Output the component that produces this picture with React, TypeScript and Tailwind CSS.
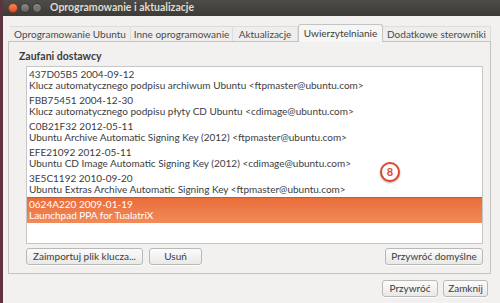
import React from "react";

const rows = [
  { id: "437D05B5 2004-09-12", name: "Klucz automatycznego podpisu archiwum Ubuntu <ftpmaster@ubuntu.com>" },
  { id: "FBB75451 2004-12-30", name: "Klucz automatycznego podpisu płyty CD Ubuntu <cdimage@ubuntu.com>" },
  { id: "C0B21F32 2012-05-11", name: "Ubuntu Archive Automatic Signing Key (2012) <ftpmaster@ubuntu.com>" },
  { id: "EFE21092 2012-05-11", name: "Ubuntu CD Image Automatic Signing Key (2012) <cdimage@ubuntu.com>" },
  { id: "3E5C1192 2010-09-20", name: "Ubuntu Extras Archive Automatic Signing Key <ftpmaster@ubuntu.com>" },
  { id: "0624A220 2009-01-19", name: "Launchpad PPA for TualatriX", selected: true },
];

const tabs = [
  { label: "Oprogramowanie Ubuntu", w: "w-[121px]" },
  { label: "Inne oprogramowanie", w: "w-[102px]" },
  { label: "Aktualizacje", w: "w-[65px]" },
  { label: "Uwierzytelnianie", w: "w-[85px]", active: true },
  { label: "Dodatkowe sterowniki", w: "w-[108px]" },
];

const Button = ({ children, className = "" }: { children: React.ReactNode; className?: string }) => (
  <div
    className={
      "flex h-[17px] items-center justify-center whitespace-nowrap rounded-[3px] border border-[#b9b9b7] bg-gradient-to-b from-[#fbfbfb] to-[#e9e9e8] text-[10px] text-[#3c3c3c] shadow-[0_1px_0_rgba(255,255,255,0.8)] " +
      className
    }
  >
    {children}
  </div>
);

export default function App() {
  return (
    <div className="flex h-[303px] w-[500px] overflow-hidden bg-[#f2f1f0] font-['Lato',sans-serif] text-[#3c3c3c]">
      <div className="w-[3px] bg-[#5e3340]" />
      <div className="flex flex-1 flex-col">
        {/* title bar */}
        <div className="flex h-[16px] items-center bg-gradient-to-b from-[#4d4c48] to-[#3c3b37] pl-[5px]">
          <div className="h-[10px] w-[10px] rounded-full border border-[#9c3a17] bg-gradient-to-b from-[#f5845a] to-[#df4f1e]" />
          <div className="ml-[2px] h-[10px] w-[10px] rounded-full border border-[#3a3935] bg-gradient-to-b from-[#8c8b86] to-[#62615d]" />
          <div className="ml-[2px] flex h-[10px] w-[10px] items-center justify-center rounded-full border border-[#3a3935] bg-gradient-to-b from-[#8c8b86] to-[#62615d]">
            <div className="h-[5px] w-[5px] rounded-full bg-[#75746f]" />
          </div>
          <span className="ml-[8px] whitespace-nowrap text-[10.5px] font-bold text-[#dfdbd2]">Oprogramowanie i aktualizacje</span>
        </div>

        {/* body */}
        <div className="flex flex-1 flex-col pl-[5px] pr-[9px]">
          <div className="flex h-[25px] items-end pl-[2px] pt-[8px]">
            {tabs.map((t) =>
              t.active ? (
                <div
                  key={t.label}
                  className={t.w + " relative -mb-px flex h-[18px] items-center justify-center whitespace-nowrap rounded-t-[3px] border border-b-0 border-[#c4c4c2] bg-[#f6f6f5] text-[10px]"}
                >
                  {t.label}
                </div>
              ) : (
                <div
                  key={t.label}
                  className={t.w + " flex h-[15px] items-center justify-center whitespace-nowrap border-r border-t border-[#dcdcda] bg-[#efeeed] text-[10px] text-[#4a4a4a]"}
                >
                  {t.label}
                </div>
              )
            )}
          </div>

          <div className="flex h-[233px] flex-col border border-[#c4c4c2] bg-[#f2f1f0]">
            <div className="pl-[10px] pt-[8px] text-[10.5px] font-bold leading-[12px]">Zaufani dostawcy</div>
            <div className="relative ml-[17px] mr-[7px] mt-[4px] h-[178px] border border-[#c6c6c4] bg-white">
              {rows.map((r) =>
                r.selected ? (
                  <div
                    key={r.id}
                    className="h-[26px] whitespace-nowrap border-t border-[#d4562a] bg-gradient-to-b from-[#e96d3a] to-[#f28a58] pl-[2px] pt-[1px] text-[10px] leading-[11px] text-white"
                  >
                    <div>{r.id}</div>
                    <div>{r.name}</div>
                  </div>
                ) : (
                  <div key={r.id} className="h-[26px] whitespace-nowrap pl-[2px] pt-[2px] text-[10px] leading-[11px] text-[#3c3c3c]">
                    <div>{r.id}</div>
                    <div>{r.name}</div>
                  </div>
                )
              )}
              <div className="absolute left-[353px] top-[95px] flex h-[20px] w-[20px] items-center justify-center rounded-full border-2 border-[#e2462c] bg-white text-[11px] font-bold text-[#e2462c] shadow-[0_1px_2px_rgba(0,0,0,0.35)]">
                8
              </div>
            </div>
            <div className="ml-[17px] mr-[7px] mt-[4px] flex">
              <Button className="w-[117px]">Zaimportuj plik klucza...</Button>
              <Button className="ml-[6px] w-[53px]">Usuń</Button>
              <Button className="ml-auto w-[98px]">Przywróć domyślne</Button>
            </div>
          </div>

          <div className="mt-[6px] flex justify-end pr-[3px]">
            <Button className="w-[56px]">Przywróć</Button>
            <Button className="ml-[5px] w-[45px]">Zamknij</Button>
          </div>
        </div>
      </div>
    </div>
  );
}
